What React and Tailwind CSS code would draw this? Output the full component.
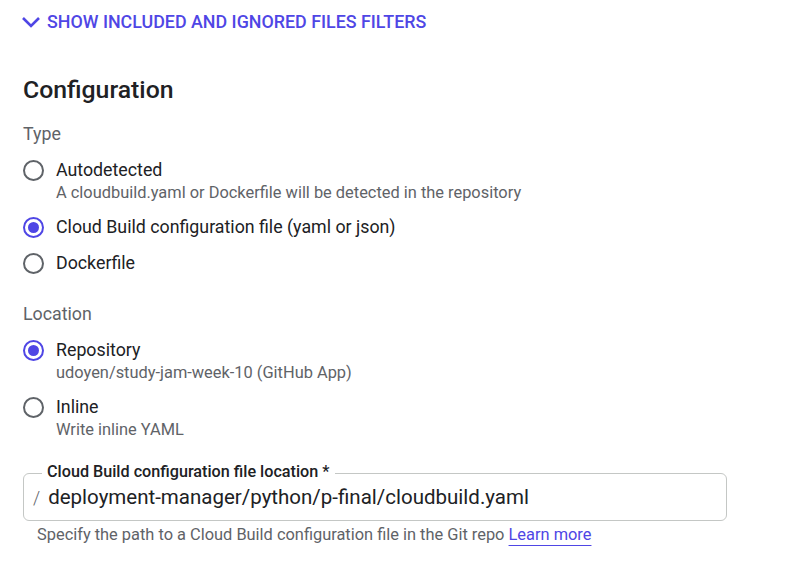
import React from "react";

function Radio({ checked }) {
  return (
    <span
      className={
        "mt-[2px] flex h-[21px] w-[21px] shrink-0 items-center justify-center rounded-full border-2 " +
        (checked ? "border-[#4f46e5]" : "border-[#5f6368]")
      }
    >
      {checked && <span className="h-[11px] w-[11px] rounded-full bg-[#4f46e5]" />}
    </span>
  );
}

function Option({ checked, label, sub }) {
  return (
    <div className="flex items-start gap-[12px]">
      <Radio checked={checked} />
      <div className="flex flex-col">
        <span className="text-[17.8px] leading-[24px] text-[#202124]">{label}</span>
        {sub && <span className="text-[16.4px] leading-[22px] text-[#5f6368]">{sub}</span>}
      </div>
    </div>
  );
}

export default function App() {
  return (
    <div className="min-h-[575px] w-[803px] bg-white font-['Roboto',sans-serif]">
      <div className="px-[23px] pt-[12px]">
        <div className="flex items-center gap-[6px] text-[#4f46e5]">
          <svg width="20" height="20" viewBox="0 0 20 20" className="ml-[-2px]">
            <path d="M2 6 L10 14 L18 6" fill="none" stroke="currentColor" strokeWidth="2.6" />
          </svg>
          <span className="text-[17.85px] font-medium leading-[20px]">
            SHOW INCLUDED AND IGNORED FILES FILTERS
          </span>
        </div>

        <h2 className="mt-[42px] text-[24.8px] font-medium leading-[32px] text-[#202124]">Configuration</h2>

        <div className="mt-[16px] text-[17.8px] leading-[24px] text-[#5f6368]">Type</div>
        <div className="mt-[12px] flex flex-col gap-[11px]">
          <Option label="Autodetected" sub="A cloudbuild.yaml or Dockerfile will be detected in the repository" />
          <Option checked label="Cloud Build configuration file (yaml or json)" />
          <div className="mt-[1px]">
            <Option label="Dockerfile" />
          </div>
        </div>

        <div className="mt-[27px] text-[17.8px] leading-[24px] text-[#5f6368]">Location</div>
        <div className="mt-[12px] flex flex-col gap-[11px]">
          <Option checked label="Repository" sub="udoyen/study-jam-week-10 (GitHub App)" />
          <Option label="Inline" sub="Write inline YAML" />
        </div>

        <div className="relative mt-[32px] w-[704px]">
          <div className="flex h-[48px] items-center rounded-[6px] border border-[#c4c7c5] px-[9px]">
            <span className="mr-[8px] text-[18px] font-light text-[#5f6368]">/</span>
            <span className="text-[20.5px] text-[#202124]">deployment-manager/python/p-final/cloudbuild.yaml</span>
          </div>
          <span className="absolute left-[19px] top-[-11px] bg-white px-[5px] text-[16.2px] font-medium leading-[20px] text-[#202124]">
            Cloud Build configuration file location *
          </span>
        </div>
        <div className="mt-[3px] pl-[14px] text-[16.4px] leading-[22px] text-[#5f6368]">
          Specify the path to a Cloud Build configuration file in the Git repo{" "}
          <span className="text-[#4f46e5] underline decoration-[#4f46e5] underline-offset-[5px]">Learn more</span>
        </div>
      </div>
    </div>
  );
}
